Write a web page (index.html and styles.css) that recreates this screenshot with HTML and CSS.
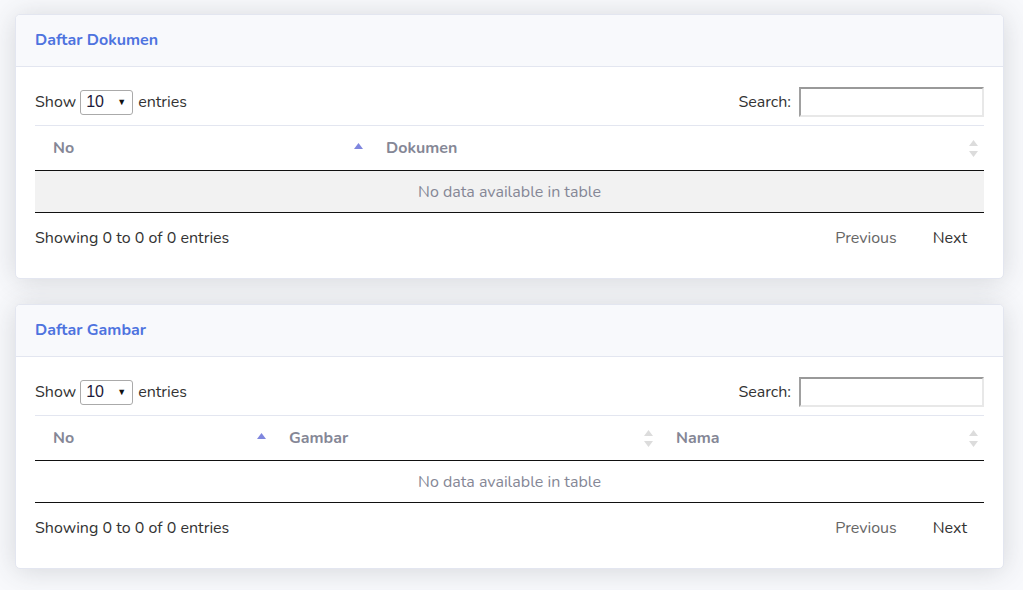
FILE: index.html
```html
<!DOCTYPE html>
<html lang="id">
<head>
<meta charset="utf-8">
<title>Daftar</title>
<link rel="stylesheet" href="styles.css">
</head>
<body>
<div class="page">
  <section class="card">
    <div class="card-header"><h6 class="card-title">Daftar Dokumen</h6></div>
    <div class="card-body">
      <div class="toolbar">
        <label class="length">Show
          <span class="select"><span class="select-value">10</span><span class="select-arrow">&#9660;</span></span>
          entries</label>
        <label class="filter">Search: <input type="search" class="search"></label>
      </div>
      <table class="dt striped">
        <thead>
          <tr>
            <th class="w-no1 sorted">No<svg class="sort" width="9" height="6" viewBox="0 0 9 6"><path d="M4.5 0 L9 6 L0 6 Z" fill="#7f86de"/></svg></th>
            <th>Dokumen<svg class="sort both" width="9" height="17" viewBox="0 0 9 17"><path d="M4.5 0 L9 6 L0 6 Z M4.5 17 L0 11 L9 11 Z" fill="#dcdcdc"/></svg></th>
          </tr>
        </thead>
        <tbody>
          <tr><td colspan="2" class="empty">No data available in table</td></tr>
        </tbody>
      </table>
      <div class="footer">
        <div class="info">Showing 0 to 0 of 0 entries</div>
        <div class="paging"><span class="pbtn disabled">Previous</span><span class="pbtn">Next</span></div>
      </div>
    </div>
  </section>

  <section class="card">
    <div class="card-header"><h6 class="card-title">Daftar Gambar</h6></div>
    <div class="card-body">
      <div class="toolbar">
        <label class="length">Show
          <span class="select"><span class="select-value">10</span><span class="select-arrow">&#9660;</span></span>
          entries</label>
        <label class="filter">Search: <input type="search" class="search"></label>
      </div>
      <table class="dt">
        <thead>
          <tr>
            <th class="w-no2 sorted">No<svg class="sort" width="9" height="6" viewBox="0 0 9 6"><path d="M4.5 0 L9 6 L0 6 Z" fill="#7f86de"/></svg></th>
            <th class="w-gambar">Gambar<svg class="sort both mid" width="9" height="17" viewBox="0 0 9 17"><path d="M4.5 0 L9 6 L0 6 Z M4.5 17 L0 11 L9 11 Z" fill="#dcdcdc"/></svg></th>
            <th>Nama<svg class="sort both" width="9" height="17" viewBox="0 0 9 17"><path d="M4.5 0 L9 6 L0 6 Z M4.5 17 L0 11 L9 11 Z" fill="#dcdcdc"/></svg></th>
          </tr>
        </thead>
        <tbody>
          <tr><td colspan="3" class="empty">No data available in table</td></tr>
        </tbody>
      </table>
      <div class="footer">
        <div class="info">Showing 0 to 0 of 0 entries</div>
        <div class="paging"><span class="pbtn disabled">Previous</span><span class="pbtn">Next</span></div>
      </div>
    </div>
  </section>
</div>
</body>
</html>
```

FILE: styles.css
```css
* { box-sizing: border-box; }
html, body { margin: 0; padding: 0; }
body {
  background: #f8f9fc;
  font-family: "Nunito", "Noto Sans", "Open Sans", sans-serif;
  font-size: 16px;
  color: #858796;
  line-height: 1.5;
}
.page {
  padding: 14px 19px 24px 15px;
  display: flex;
  flex-direction: column;
  gap: 25px;
}
.card {
  background: #fff;
  border: 1px solid #e3e6f0;
  border-radius: 5px;
  box-shadow: 0 2px 28px 0 rgba(58, 59, 69, 0.18);
  overflow: hidden;
}
.card-header {
  background: #f8f9fc;
  border-bottom: 1px solid #e3e6f0;
  padding: 16px 19px;
}
.card-title {
  margin: 0;
  font-size: 16px;
  font-weight: 700;
  line-height: 19px;
  color: #4e73df;
}
.card-body {
  padding: 20px 19px 24px 19px;
}
.toolbar {
  display: flex;
  justify-content: space-between;
  align-items: center;
  height: 30px;
  margin-bottom: 8px;
  color: #333;
}
.length { display: flex; align-items: center; gap: 4px; }
.select {
  position: relative;
  display: inline-flex;
  align-items: center;
  width: 53px;
  height: 25px;
  border: 1px solid #aaa;
  border-radius: 3px;
  padding-left: 5px;
  color: #1d1a3a;
  margin: 0 1px 0 0;
}
.select-value { font-family: "Liberation Sans", sans-serif; font-size: 16px; }
.select-arrow {
  position: absolute;
  right: 6px;
  top: 5px;
  font-size: 9px;
  line-height: 12px;
  color: #111;
}
.filter { display: flex; align-items: center; gap: 8px; }
.search {
  width: 185px;
  height: 30px;
  margin: 0;
  border-top: 2px solid #999;
  border-left: 2px solid #a0a0a0;
  border-right: 2px solid #e8e8e8;
  border-bottom: 2px solid #e8e8e8;
  background: #fff;
  outline: none;
}
.dt {
  width: 100%;
  border-collapse: collapse;
  table-layout: fixed;
}
.dt th {
  position: relative;
  text-align: left;
  font-weight: 700;
  color: #858796;
  padding: 10px 18px 10px 18px;
  line-height: 24px;
  border-top: 1px solid #e3e6f0;
  border-bottom: 1px solid #111;
}
.w-no1 { width: 333px; }
.w-no2 { width: 236px; }
.w-gambar { width: 387px; }
.sort {
  position: absolute;
  right: 5px;
  top: 17px;
}
.sort.both { top: 14px; right: 6px; }
.sort.both.mid { right: 5px; }
.dt td {
  padding: 9px 10px 8px 10px;
  line-height: 24px;
  border-bottom: 1px solid #111;
}
.striped tbody tr { background: #f2f2f2; }
.empty { text-align: center; color: #858796; }
.footer {
  display: flex;
  justify-content: space-between;
  align-items: center;
  padding-top: 9px;
  color: #333;
}
.paging { display: flex; }
.pbtn {
  padding: 4px 17px 4px 19px;
  line-height: 24px;
  color: #333;
}
.pbtn.disabled { color: #666; }
```
